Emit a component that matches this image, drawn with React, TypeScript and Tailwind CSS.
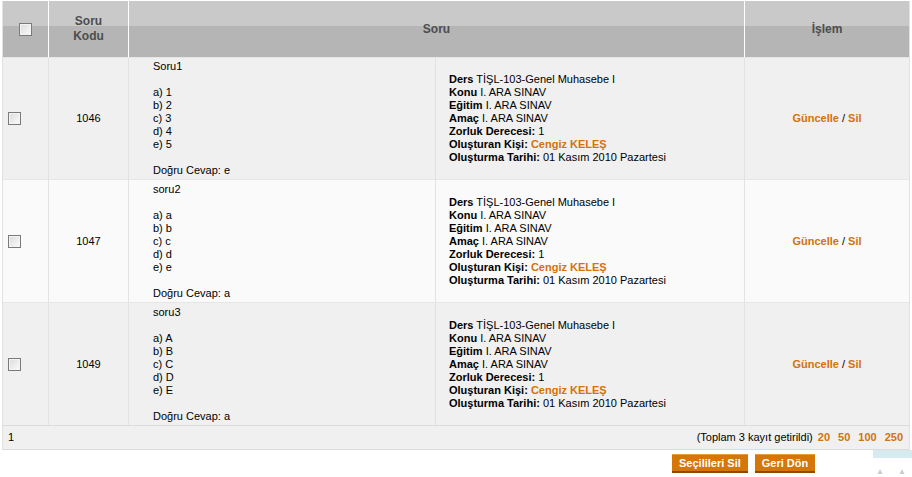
import React from 'react';

type Row = {
  code: string;
  title: string;
  options: string[];
  answer: string;
  bg: string;
};

const rows: Row[] = [
  { code: '1046', title: 'Soru1', options: ['a) 1', 'b) 2', 'c) 3', 'd) 4', 'e) 5'], answer: 'e', bg: 'bg-[#f0f0f0]' },
  { code: '1047', title: 'soru2', options: ['a) a', 'b) b', 'c) c', 'd) d', 'e) e'], answer: 'a', bg: 'bg-[#fafafa]' },
  { code: '1049', title: 'soru3', options: ['a) A', 'b) B', 'c) C', 'd) D', 'e) E'], answer: 'a', bg: 'bg-[#f0f0f0]' },
];

const Box = () => (
  <span className="block w-[13px] h-[13px] border border-[#7a7a7a] bg-gradient-to-br from-[#dcdcdc] to-[#fbfbfb] shadow-[inset_0_0_0_1px_#f4f4f4]" />
);

export default function App() {
  return (
    <div className="relative w-[912px] h-[477px] bg-white overflow-hidden font-['Liberation_Sans',Arial,sans-serif] text-[11px] leading-[13px] text-black">
      <div className="ml-[2px] mt-px w-[908px] border-l border-r border-[#e2e2e2]">
        {/* header */}
        <div className="flex h-[56px] bg-[linear-gradient(#c9c9c9_0,#c9c9c9_45%,#b5b5b5_45%,#b5b5b5_100%)] text-[#4d4d4d] font-bold text-[12px] leading-[15px]">
          <div className="w-[46px] flex items-center justify-center border-r border-white">
            <Box />
          </div>
          <div className="w-[80px] flex items-center justify-center text-center border-r border-white">
            Soru<br />Kodu
          </div>
          <div className="w-[616px] flex items-center justify-center border-r border-white">Soru</div>
          <div className="flex-1 flex items-center justify-center">İşlem</div>
        </div>

        {rows.map((r, i) => (
          <div key={r.code} className={`flex ${i === 0 ? 'h-[122px]' : 'h-[123px]'} ${r.bg} border-t border-[#e6e6e6]`}>
            <div className="w-[46px] flex items-center pl-[5px] border-r border-[#e2e2e2]">
              <Box />
            </div>
            <div className="w-[80px] flex items-center justify-center border-r border-[#e2e2e2]">{r.code}</div>
            <div className="w-[616px] flex border-r border-[#e2e2e2]">
              <div className="w-[307px] flex flex-col justify-center pl-[24px] border-r border-[#e2e2e2]">
                <div>{r.title}</div>
                <div>&nbsp;</div>
                {r.options.map((o) => (
                  <div key={o}>{o}</div>
                ))}
                <div>&nbsp;</div>
                <div>Doğru Cevap: {r.answer}</div>
              </div>
              <div className="flex-1 flex flex-col justify-center pl-[13px]">
                <div><b>Ders</b> TİŞL-103-Genel Muhasebe I</div>
                <div><b>Konu</b> I. ARA SINAV</div>
                <div><b>Eğitim</b> I. ARA SINAV</div>
                <div><b>Amaç</b> I. ARA SINAV</div>
                <div><b>Zorluk Derecesi:</b> 1</div>
                <div><b>Oluşturan Kişi:</b> <b className="text-[#d4720c]">Cengiz KELEŞ</b></div>
                <div><b>Oluşturma Tarihi:</b> 01 Kasım 2010 Pazartesi</div>
              </div>
            </div>
            <div className="flex-1 flex items-center justify-center font-bold text-[#d4720c]">
              Güncelle<span className="text-black font-normal">&nbsp;/&nbsp;</span>Sil
            </div>
          </div>
        ))}

        {/* footer */}
        <div className="flex items-center justify-between h-[25px] bg-[#f0f0f0] border-t border-b border-[#dcdcdc] pl-[5px] pr-[6px]">
          <span>1</span>
          <span>
            (Toplam 3 kayıt getirildi)
            <b className="text-[#d4720c] ml-[5px]">20</b>
            <b className="text-[#d4720c] ml-[8px]">50</b>
            <b className="text-[#d4720c] ml-[8px]">100</b>
            <b className="text-[#d4720c] ml-[8px]">250</b>
          </span>
        </div>
      </div>

      <div className="flex gap-[7px] ml-[672px] mt-[4px]">
        <button className="h-[19px] px-[7px] bg-[#d57608] border-t border-[#e89a3e] border-b-2 border-b-[#8a4a05] text-white font-bold text-[11px] leading-[15px]">
          Seçilileri Sil
        </button>
        <button className="h-[19px] px-[7px] bg-[#d57608] border-t border-[#e89a3e] border-b-2 border-b-[#8a4a05] text-white font-bold text-[11px] leading-[15px]">
          Geri Dön
        </button>
      </div>

      {/* partly hidden widget at right */}
      <div className="absolute left-[873px] top-[450px] w-[39px] h-[8px] bg-[#d5ebef]" />
      <div className="absolute left-[876px] top-[468px] flex gap-[14px] text-[8px] leading-[8px] text-[#c4ccd4]">
        <span>▲</span>
        <span>▲</span>
      </div>
    </div>
  );
}
